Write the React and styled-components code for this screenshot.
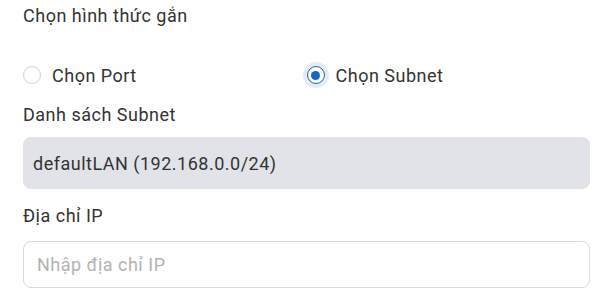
import React, { useState } from "react";
import styled, { createGlobalStyle } from "styled-components";

const GlobalStyle = createGlobalStyle`
  body {
    margin: 0;
    background: #ffffff;
    font-family: Roboto, "Noto Sans", sans-serif;
    color: #333333;
    letter-spacing: 0.5px;
  }
`;

const Form = styled.div`
  width: 567px;
  padding: 4px 0 0 23px;
`;

const Label = styled.div`
  font-size: 18px;
  line-height: 24px;
  color: #333333;
  margin-bottom: ${(p) => p.gap || 10}px;
`;

const RadioGroup = styled.div`
  display: grid;
  grid-template-columns: 1fr 1fr;
  margin-bottom: 16px;
`;

const Option = styled.label`
  display: flex;
  align-items: center;
  gap: 11px;
  height: 24px;
  font-size: 18px;
  color: #333333;
  cursor: pointer;
`;

const Circle = styled.span`
  position: relative;
  box-sizing: border-box;
  width: 18px;
  height: 18px;
  border-radius: 50%;
  border: ${(p) => (p.checked ? "1.5px solid #1565c0" : "1px solid #d4d4d4")};
  background: #ffffff;
  box-shadow: ${(p) => (p.checked ? "0 0 0 4px #e8ecf1" : "none")};
  display: flex;
  align-items: center;
  justify-content: center;

  &::after {
    content: "";
    display: ${(p) => (p.checked ? "block" : "none")};
    width: 9px;
    height: 9px;
    border-radius: 50%;
    background: #1565c0;
  }
`;

const SelectBox = styled.div`
  box-sizing: border-box;
  height: 52px;
  border-radius: 8px;
  background: #e2e3e8;
  padding: 0 10px;
  display: flex;
  align-items: center;
  font-size: 18px;
  color: #333333;
  margin-bottom: 15px;
`;

const Input = styled.input`
  box-sizing: border-box;
  width: 100%;
  height: 47px;
  border: 1px solid #d9d9d9;
  border-radius: 8px;
  padding: 0 13px;
  font-family: Roboto, "Noto Sans", sans-serif;
  font-size: 18px;
  letter-spacing: 0.5px;
  color: #333333;
  outline: none;

  &::placeholder {
    color: #b3b3b3;
  }
`;

export default function App() {
  const [mode, setMode] = useState("subnet");
  return (
    <>
      <GlobalStyle />
      <Form>
        <Label gap={35}>Chọn hình thức gắn</Label>
        <RadioGroup>
          <Option onClick={() => setMode("port")}>
            <Circle checked={mode === "port"} />
            Chọn Port
          </Option>
          <Option onClick={() => setMode("subnet")}>
            <Circle checked={mode === "subnet"} />
            Chọn Subnet
          </Option>
        </RadioGroup>
        <Label>Danh sách Subnet</Label>
        <SelectBox>defaultLAN (192.168.0.0/24)</SelectBox>
        <Label gap={13}>Địa chỉ IP</Label>
        <Input placeholder="Nhập địa chỉ IP" />
      </Form>
    </>
  );
}
